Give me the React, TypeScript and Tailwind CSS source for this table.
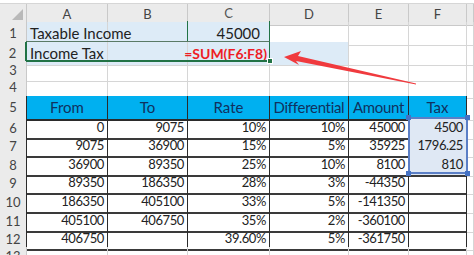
import React from "react";

type CellDef = {
  text?: React.ReactNode;
  cls?: string;
};

const grid = "grid grid-cols-[27px_81px_80px_82px_79px_60px_58px_7px]";
const gridLine = "border-r border-b border-[#d6d6d6]";
const hdr = "flex items-center justify-center bg-[#ebebeb] border-r border-b border-[#c9c9c9] text-[13px] text-[#444]";
const tbl = "flex items-center justify-end pr-[3px] border-r border-r-[#2b2b2b] border-b-2 border-b-[#3a3a3a] text-[13px] tracking-[-0.4px] text-[#222]";
const thead = "flex items-center justify-center border-r border-r-[#2b2b2b] border-b-2 border-b-[#2b2b2b] bg-[#00b0f0] text-[15px] text-[#10315e]";
const labelCell = "relative z-10 flex items-center pl-[3px] bg-[#ddebf7] border-r border-b border-[#d6d6d6] text-[15px] text-[#222]";

const data: string[][] = [
  ["0", "9075", "10%", "10%", "45000", "4500"],
  ["9075", "36900", "15%", "5%", "35925", "1796.25"],
  ["36900", "89350", "25%", "10%", "8100", "810"],
  ["89350", "186350", "28%", "3%", "-44350", ""],
  ["186350", "405100", "33%", "5%", "-141350", ""],
  ["405100", "406750", "35%", "2%", "-360100", ""],
  ["406750", "", "39.60%", "5%", "-361750", ""],
];

const dataHeights = ["h-[18px]", "h-[19px]", "h-[18px]", "h-[19px]", "h-[19px]", "h-[18px]", "h-[18px]"];

function Row({ h, cells }: { h: string; cells: CellDef[] }) {
  return (
    <div className={`${grid} ${h}`}>
      {cells.map((c, i) => (
        <div key={i} className={`overflow-visible whitespace-nowrap ${c.cls ?? gridLine}`}>
          {c.text}
        </div>
      ))}
    </div>
  );
}

function rowHeader(n: string, dark?: boolean) {
  return {
    text: n,
    cls: `${hdr} ${dark ? "border-r-[#2b2b2b]" : ""}`,
  };
}

function empty(extra = "") {
  return { cls: `${gridLine} ${extra}` };
}

const corner = (
  <svg width="26" height="18" className="block">
    <polygon points="23,5 23,16 12,16" fill="#b9b9b9" />
  </svg>
);

export default function App() {
  return (
    <div className="relative h-[255px] w-[474px] overflow-hidden bg-white pt-[3px] font-[Lato,'Noto_Sans',sans-serif]">
      {/* column headers */}
      <Row
        h="h-[19px] border-t border-[#d6d6d6]"
        cells={[
          { text: corner, cls: `${hdr} items-start justify-start` },
          { text: "A", cls: hdr },
          { text: "B", cls: hdr },
          { text: "C", cls: `${hdr} bg-[#d4d4d4] text-[#555] border-b-2 border-b-[#217346]` },
          { text: "D", cls: hdr },
          { text: "E", cls: hdr },
          { text: "F", cls: hdr },
          { cls: hdr },
        ]}
      />
      <Row
        h="h-[20px]"
        cells={[
          rowHeader("1"),
          { text: "Taxable Income", cls: labelCell },
          { cls: `${gridLine} bg-[#ddebf7]` },
          { text: "45000", cls: `${gridLine} bg-[#ddebf7] flex items-center justify-end pr-[9px] text-[15px] text-[#222]` },
          empty(),
          empty(),
          empty(),
          empty(),
        ]}
      />
      <Row
        h="h-[19px]"
        cells={[
          { text: "2", cls: `${hdr} bg-[#d4d4d4] text-[#5f7f6c] border-r-2 border-r-[#217346]` },
          { text: "Income Tax", cls: labelCell },
          { cls: `${gridLine} bg-[#ddebf7]` },
          {
            text: "=SUM(F6:F8)",
            cls: `${gridLine} bg-[#ddebf7] flex items-center justify-end pr-[2px] text-[14px] font-bold text-[#ee1c25]`,
          },
          { cls: `${gridLine} bg-[#ddebf7]` },
          empty(),
          empty(),
          empty(),
        ]}
      />
      <Row h="h-[17px]" cells={[rowHeader("3"), empty(), empty(), empty(), empty(), empty(), empty(), empty()]} />
      <Row
        h="h-[18px]"
        cells={[
          rowHeader("4"),
          empty("border-b-2 border-b-[#2b2b2b]"),
          empty("border-b-2 border-b-[#2b2b2b]"),
          empty("border-b-2 border-b-[#2b2b2b]"),
          empty("border-b-2 border-b-[#2b2b2b]"),
          empty("border-b-2 border-b-[#2b2b2b]"),
          empty("border-b-2 border-b-[#2b2b2b]"),
          empty(),
        ]}
      />
      <Row
        h="h-[22px]"
        cells={[
          rowHeader("5", true),
          { text: "From", cls: thead },
          { text: "To", cls: thead },
          { text: "Rate", cls: thead },
          { text: "Differential", cls: `${thead} tracking-[-0.3px]` },
          { text: "Amount", cls: `${thead} tracking-[-0.3px]` },
          { text: "Tax", cls: thead },
          empty(),
        ]}
      />
      {data.map((r, i) => (
        <Row
          key={i}
          h={dataHeights[i]}
          cells={[
            rowHeader(String(i + 6), true),
            ...r.map((t, j) => ({
              text: t,
              cls: `${tbl} ${j === 5 && i < 3 ? "bg-[#dfe8f4]" : ""}`,
            })),
            empty(),
          ]}
        />
      ))}
      <Row
        h="h-[18px]"
        cells={[rowHeader("13"), empty(), empty(), empty(), empty(), empty(), empty(), empty()]}
      />

      {/* active cell outlines */}
      <div className="absolute left-[187px] top-[21px] h-[21px] w-[83px] border-x border-[#217346]" />
      <div className="absolute left-[26px] top-[41px] z-20 h-[21px] w-[244px] border border-t-[#5a7a66] border-[#217346] border-b-2" />
      <div className="absolute left-[267px] top-[58px] z-20 h-[6px] w-[6px] border border-white bg-[#217346]" />

      {/* range selection F6:F8 */}
      <div className="absolute left-[408px] top-[117px] h-[57px] w-[60px] border-2 border-[#5b7fc6]">
        <div className="absolute -left-[4px] -top-[4px] h-[5px] w-[5px] bg-[#4472c4]" />
        <div className="absolute -right-[4px] -top-[4px] h-[5px] w-[5px] bg-[#4472c4]" />
        <div className="absolute -bottom-[4px] -left-[4px] h-[5px] w-[5px] bg-[#4472c4]" />
        <div className="absolute -bottom-[4px] -right-[4px] h-[5px] w-[5px] bg-[#4472c4]" />
      </div>

      {/* red arrow */}
      <svg className="absolute left-0 top-0 z-30" width="474" height="255">
        <polygon
          points="284,57 301,51 298,56 416,83.6 416,84.4 296,61 299,65"
          fill="#f03a3e"
        />
      </svg>
    </div>
  );
}
